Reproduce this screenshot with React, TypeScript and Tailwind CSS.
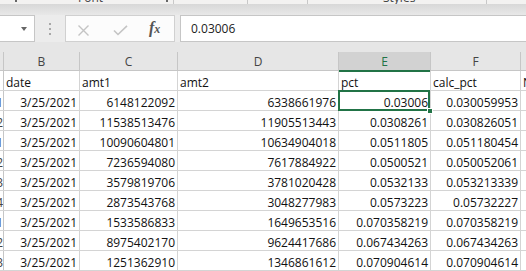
import React from "react";

const rows: string[][] = [
  ["", "date", "amt1", "amt2", "pct", "calc_pct", "N"],
  ["1", "3/25/2021", "6148122092", "6338661976", "0.03006", "0.030059953", ""],
  ["2", "3/25/2021", "11538513476", "11905513443", "0.0308261", "0.030826051", ""],
  ["1", "3/25/2021", "10090604801", "10634904018", "0.0511805", "0.051180454", ""],
  ["2", "3/25/2021", "7236594080", "7617884922", "0.0500521", "0.050052061", ""],
  ["3", "3/25/2021", "3579819706", "3781020428", "0.0532133", "0.053213339", ""],
  ["4", "3/25/2021", "2873543768", "3048277983", "0.0573223", "0.05732227", ""],
  ["1", "3/25/2021", "1533586833", "1649653516", "0.070358219", "0.070358219", ""],
  ["2", "3/25/2021", "8975402170", "9624417686", "0.067434263", "0.067434263", ""],
  ["3", "3/25/2021", "1251362910", "1346861612", "0.070904614", "0.070904614", ""],
];

function HeaderRow() {
  const cell =
    "h-full border-r border-[#c6c6c6] flex items-center justify-center text-[#444]";
  return (
    <div className="h-[19px] flex bg-[#e6e6e6] border-b border-[#c6c6c6] leading-[15px]">
      <div className="w-[4px] h-full border-r border-[#c6c6c6]" />
      <div className={`w-[76px] ${cell}`}>B</div>
      <div className={`w-[98px] ${cell}`}>C</div>
      <div className={`w-[161px] ${cell}`}>D</div>
      <div className="w-[92px] h-full border-r border-[#c6c6c6] flex items-center justify-center text-[#217346] bg-[#d2d2d2] relative">
        E
        <div className="absolute left-0 right-0 -bottom-[2px] h-[2px] bg-[#217346]" />
      </div>
      <div className={`w-[90px] ${cell}`}>F</div>
      <div className="flex-1 h-full" />
    </div>
  );
}

function DataRow({ r, idx }: { r: string[]; idx: number }) {
  const isHead = idx === 0;
  const base = "h-full border-r border-[#d4d4d4] flex items-end overflow-hidden whitespace-nowrap";
  const num = isHead ? "justify-start pl-[2px]" : "justify-end pr-[2px]";
  return (
    <div className="h-[20px] flex border-b border-[#d4d4d4] leading-[15px]">
      <div className="w-[4px] h-full border-r border-[#c6c6c6] flex items-end justify-end overflow-hidden whitespace-nowrap text-[#444]">
        {r[0]}
      </div>
      <div className={`w-[76px] ${base} ${num}`}>{r[1]}</div>
      <div className={`w-[98px] ${base} ${num}`}>{r[2]}</div>
      <div className={`w-[161px] ${base} ${num}`}>{r[3]}</div>
      <div className={`w-[92px] ${base} ${num} ${idx === 1 ? "!overflow-visible relative" : ""}`}>
        {r[4]}
        {idx === 1 && (
          <>
            <div className="absolute -left-[1px] -top-[1px] right-0 -bottom-[1px] border-2 border-[#217346]" />
            <div className="absolute -right-[3px] -bottom-[4px] w-[6px] h-[6px] bg-[#217346] border border-white" />
          </>
        )}
      </div>
      <div className={`w-[90px] ${base} ${num}`}>{r[5]}</div>
      <div className="flex-1 h-full flex items-end pl-[2px] overflow-hidden whitespace-nowrap">{r[6]}</div>
    </div>
  );
}

export default function App() {
  return (
    <div className="w-[526px] h-[271px] overflow-hidden bg-white text-[12px] text-[#111] font-['Open_Sans',sans-serif]">
      {/* ribbon bottom strip */}
      <div className="h-[4px] bg-[#f3f2f1] flex overflow-hidden text-[12px] leading-[12px] text-[#444]">
        <div className="w-[15px] shrink-0" />
        <div className="w-[2px] h-[2px] bg-[#666] shrink-0" />
        <div className="w-[61px] shrink-0" />
        <div className="w-[88px] shrink-0 self-start -mt-[8px]">Font</div>
        <div className="w-[2px] h-[2px] bg-[#666] shrink-0" />
        <div className="w-[5px] shrink-0" />
        <div className="w-[1px] bg-[#c8c8c8] shrink-0" />
        <div className="w-[73px] shrink-0" />
        <div className="w-[1px] bg-[#c8c8c8] shrink-0" />
        <div className="w-[59px] shrink-0" />
        <div className="w-[1px] bg-[#c8c8c8] shrink-0" />
        <div className="w-[75px] shrink-0" />
        <div className="w-[103px] shrink-0 self-start -mt-[8px]">Styles</div>
        <div className="w-[1px] bg-[#c8c8c8] shrink-0" />
      </div>
      <div className="h-[11px] bg-linear-to-b from-[#d8d8d8] to-[#e8e8e8]" />
      {/* formula bar */}
      <div className="h-[27px] flex bg-[#ececec]">
        <div className="w-[35px] h-full bg-white border border-l-0 border-[#c6c6c6] flex items-center justify-end pr-[7px]">
          <svg width="6" height="4" viewBox="0 0 6 4">
            <path d="M0 0H6L3 4Z" fill="#666" />
          </svg>
        </div>
        <div className="w-[30px] h-full flex flex-col items-center justify-center gap-[3px]">
          <div className="w-[2px] h-[2px] bg-[#a8a8a8]" />
          <div className="w-[2px] h-[2px] bg-[#a8a8a8]" />
          <div className="w-[2px] h-[2px] bg-[#a8a8a8]" />
        </div>
        <div className="w-[110px] h-full bg-[#fcfcfc] border border-[#d0d0d0] flex items-center pl-[12px]">
          <svg width="11" height="11" viewBox="0 0 11 11" className="mt-[3px]">
            <path d="M0.5 0.5L10.5 10.5M10.5 0.5L0.5 10.5" stroke="#c4c4c4" strokeWidth="1.4" />
          </svg>
          <div className="w-[24px]" />
          <svg width="15" height="11" viewBox="0 0 15 11" className="mt-[3px]">
            <path d="M1 5.5L5 9.5L14 0.8" stroke="#c4c4c4" strokeWidth="1.6" fill="none" />
          </svg>
          <div className="w-[21px]" />
          <span className="font-['Liberation_Serif',serif] italic font-bold text-[16px] leading-[16px] text-[#555]">
            f<span className="text-[12px]">x</span>
          </span>
        </div>
        <div className="w-[5px]" />
        <div className="flex-1 h-full bg-white border border-r-0 border-[#c6c6c6] flex items-center pl-[10px] text-[#222]">
          0.03006
        </div>
      </div>
      <div className="h-[10px] bg-[#e6e6e6]" />
      <HeaderRow />
      {rows.map((r, i) => (
        <DataRow key={i} r={r} idx={i} />
      ))}
    </div>
  );
}
